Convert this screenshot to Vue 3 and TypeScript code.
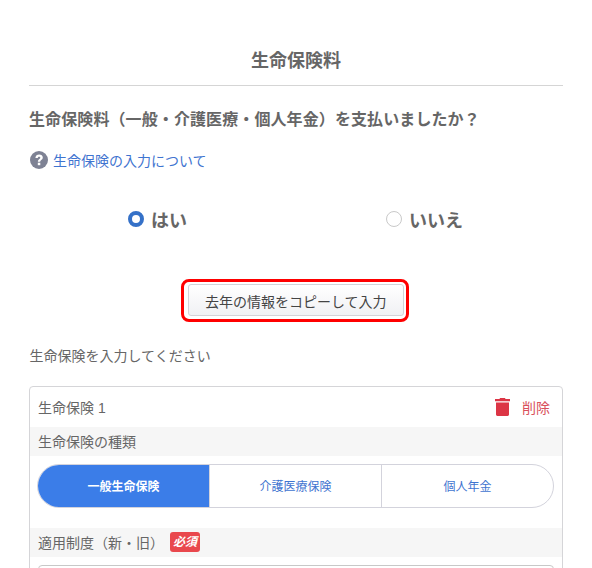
<script setup lang="ts">
import { ref } from 'vue'

const answer = ref('yes')
const kinds = ['一般生命保険', '介護医療保険', '個人年金']
const activeKind = ref(0)
</script>

<template>
  <div class="page">
    <h1 class="page-title">生命保険料</h1>
    <p class="question">生命保険料（一般・介護医療・個人年金）を支払いましたか？</p>
    <a class="help-link">
      <svg class="help-icon" viewBox="0 0 18 18" width="18" height="18">
        <circle cx="9" cy="9" r="9" fill="#7e8294" />
        <path d="M5.400 6.900C5.500 4.800 7.100 3.600 9.200 3.600c2.100 0 3.600 1.200 3.600 3 0 2.300-2.600 2.500-2.600 4.200H7.900c0-2.600 2.400-2.900 2.400-4.100 0-.6-.5-1-1.200-1-.8 0-1.200.5-1.300 1.200z" fill="#fff" />
        <rect x="7.800" y="11.700" width="2.500" height="2.500" fill="#fff" />
      </svg>
      生命保険の入力について
    </a>
    <div class="radio-row">
      <div class="radio-cell">
        <span class="radio" :class="{ on: answer === 'yes' }"></span>
        <span class="radio-label">はい</span>
      </div>
      <div class="radio-cell">
        <span class="radio" :class="{ on: answer === 'no' }"></span>
        <span class="radio-label">いいえ</span>
      </div>
    </div>
    <div class="copy-wrap">
      <div class="copy-outline">
        <button class="copy-btn">去年の情報をコピーして入力</button>
      </div>
    </div>
    <p class="lead">生命保険を入力してください</p>
    <div class="card">
      <div class="card-head">
        <span class="card-name">生命保険 1</span>
        <span class="delete">
          <svg viewBox="0 0 15 18" width="15" height="18">
            <path d="M5 0h5l.5 1H15v2.200H0V1h4.500z" fill="#dc3545" />
            <path d="M1 4.400h13v12.200c0 .8-.6 1.400-1.400 1.400H2.400C1.600 18 1 17.400 1 16.600z" fill="#dc3545" />
          </svg>
          <span class="delete-text">削除</span>
        </span>
      </div>
      <div class="field-head">生命保険の種類</div>
      <div class="segments">
        <div
          v-for="(kind, i) in kinds"
          :key="kind"
          class="segment"
          :class="{ active: i === activeKind }"
        >{{ kind }}</div>
      </div>
      <div class="field-head">適用制度（新・旧）<span class="required">必須</span></div>
      <div class="select-box"></div>
    </div>
  </div>
</template>

<style>
html, body {
  margin: 0;
  background: #fff;
  overflow: hidden;
}
</style>

<style scoped>
.page {
  height: 568px;
  overflow: hidden;
  box-sizing: border-box;
  padding: 0 29px;
  font-family: "Liberation Sans", "Noto Sans CJK JP", sans-serif;
  color: #666;
}

.page-title {
  margin: 0;
  padding: 49px 0 12px;
  border-bottom: 1px solid #d5d5d5;
  text-align: center;
  font-size: 18px;
  line-height: 24px;
  font-weight: 700;
  color: #666;
}

.question {
  margin: 22px 0 0;
  font-size: 16px;
  line-height: 24px;
  font-weight: 700;
  letter-spacing: 0.1px;
}

.help-link {
  display: flex;
  align-items: center;
  gap: 5px;
  margin-top: 16px;
  padding-left: 1px;
  height: 24px;
  font-size: 14px;
  color: #3f74d0;
}

.radio-row {
  display: flex;
  justify-content: center;
  gap: 199px;
  margin-top: 33px;
  padding-right: 1px;
}

.radio-cell {
  display: flex;
  align-items: center;
  gap: 7px;
  height: 28px;
}

.radio {
  box-sizing: border-box;
  width: 16px;
  height: 16px;
  border-radius: 50%;
  border: 1px solid #c9c9c9;
  background: #fff;
}

.radio.on {
  border: 4.500px solid #3571c8;
}

.radio-label {
  font-size: 18px;
  font-weight: 700;
}

.copy-wrap {
  display: flex;
  justify-content: center;
  margin-top: 46px;
  padding-right: 2px;
}

.copy-outline {
  border: 3.500px solid #f00;
  border-radius: 8px;
  padding: 2px 2px 2.500px 3.500px;
}

.copy-btn {
  display: block;
  width: 216px;
  height: 32px;
  padding: 1px 0 0;
  border: 1px solid #d3d3d8;
  border-radius: 3px;
  background: linear-gradient(#fff, #f0f1f4);
  font-family: inherit;
  font-size: 14px;
  color: #444;
}

.lead {
  margin: 22px 0 0;
  font-size: 14px;
  line-height: 24px;
  color: #666;
  padding-left: 0.500px;
}

.card {
  margin-top: 18px;
  border: 1px solid #d5d5d8;
  border-radius: 4px;
}

.card-head {
  display: flex;
  justify-content: space-between;
  align-items: center;
  height: 40px;
  padding: 0 12px 0 8px;
  font-size: 14px;
}

.delete {
  display: flex;
  align-items: center;
  gap: 12px;
  color: #d9505c;
}

.field-head {
  display: flex;
  align-items: center;
  height: 29px;
  padding-left: 8px;
  background: #f6f6f6;
  font-size: 14px;
}

.required {
  margin-left: 6px;
  padding: 0 3px;
  height: 20px;
  line-height: 20px;
  border-radius: 3px;
  background: #e9484d;
  color: #fff;
  font-size: 12px;
  font-weight: 700;
  font-style: italic;
}

.segments {
  display: flex;
  margin: 8px 8px 20px 7px;
  height: 44px;
  box-sizing: border-box;
  border: 1px solid #d3d3dc;
  border-radius: 22px;
  overflow: hidden;
}

.segment {
  flex: 1;
  display: flex;
  align-items: center;
  justify-content: center;
  font-size: 12px;
  color: #3f74d0;
  border-left: 1px solid #d3d3dc;
}

.segment:first-child {
  border-left: 0;
}

.segment.active {
  background: #3b7de8;
  color: #fff;
  font-weight: 700;
}

.select-box {
  margin: 8px 8px 0;
  height: 40px;
  border: 1px solid #c8c8c8;
  border-radius: 4px;
}
</style>
